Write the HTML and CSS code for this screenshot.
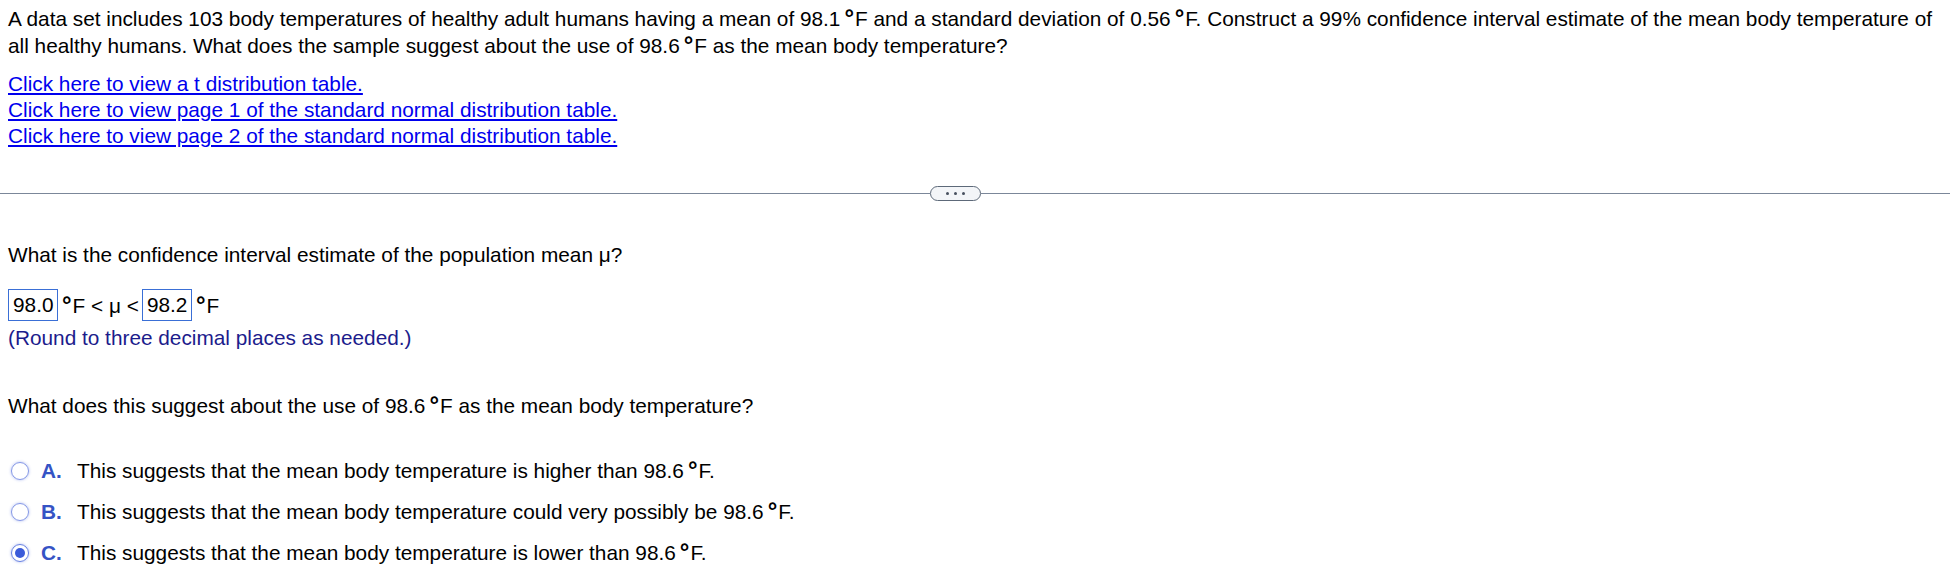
FILE: index.html
```html
<!DOCTYPE html>
<html lang="en">
<head>
  <meta charset="UTF-8" />
  <title>Confidence Interval Question</title>
  <link rel="stylesheet" href="styles.css">
</head>
<body>
  <div class="question">
    <p class="stem">A data set includes 103 body temperatures of healthy adult humans having a mean of 98.1<span class="deg">°</span>F and a standard deviation of 0.56<span class="deg">°</span>F. Construct a 99% confidence interval estimate of the mean body temperature of<br>all healthy humans. What does the sample suggest about the use of 98.6<span class="deg">°</span>F as the mean body temperature?</p>
    <div class="links">
      <a href="#">Click here to view a t distribution table.</a>
      <a href="#">Click here to view page 1 of the standard normal distribution table.</a>
      <a href="#">Click here to view page 2 of the standard normal distribution table.</a>
    </div>
  </div>

  <div class="divider">
    <button class="more" type="button"><span></span><span></span><span></span></button>
  </div>

  <div class="work">
    <p class="ask">What is the confidence interval estimate of the population mean μ?</p>
    <div class="answer-row">
      <span class="box">98.0</span>
      <span class="unit"><span class="deg">°</span>F &lt; μ &lt;</span>
      <span class="box">98.2</span>
      <span class="unit"><span class="deg">°</span>F</span>
    </div>
    <p class="hint">(Round to three decimal places as needed.)</p>

    <p class="ask ask-2">What does this suggest about the use of 98.6<span class="deg">°</span>F as the mean body temperature?</p>
    <ul class="choices">
      <li>
        <span class="radio"></span>
        <span class="letter">A.</span>
        <span>This suggests that the mean body temperature is higher than 98.6<span class="deg">°</span>F.</span>
      </li>
      <li>
        <span class="radio"></span>
        <span class="letter">B.</span>
        <span>This suggests that the mean body temperature could very possibly be 98.6<span class="deg">°</span>F.</span>
      </li>
      <li>
        <span class="radio checked"></span>
        <span class="letter">C.</span>
        <span>This suggests that the mean body temperature is lower than 98.6<span class="deg">°</span>F.</span>
      </li>
    </ul>
  </div>
</body>
</html>
```

FILE: styles.css
```css
:root {
  --text: #000;
  --link: #0000ee;
  --hint: #1c1c8c;
  --letter: #3553c5;
  --box-border: #3a6fd6;
  --rule: #7b8799;
}

body {
  margin: 0;
  padding: 5px 0 0 8px;
  font-family: 'Liberation Sans', Arial, sans-serif;
  font-size: 20.8px;
  line-height: 27px;
  color: var(--text);
  background: #fff;
}

p {
  margin: 0;
}

.deg {
  margin: 0 1px 0 4px;
  font-size: 1.15em;
  font-weight: bold;
  line-height: 0;
}

.links {
  margin-top: 12px;
  display: flex;
  flex-direction: column;
  align-items: flex-start;
  line-height: 26px;
}

.links a {
  color: var(--link);
  text-decoration: underline;
}

.divider {
  margin: 37px 0 0 -8px;
  display: flex;
  align-items: center;
}

.divider::before,
.divider::after {
  content: '';
  border-top: 1px solid var(--rule);
}

.divider::before {
  flex: 0 0 930px;
}

.divider::after {
  flex: 1;
}

.more {
  width: 51px;
  height: 15px;
  padding: 0;
  border: 1.5px solid #5d6979;
  border-radius: 8px;
  background: #f3f5f8;
  display: flex;
  align-items: center;
  justify-content: center;
  gap: 5px;
}

.more span {
  width: 3px;
  height: 3px;
  border-radius: 50%;
  background: #47505e;
}

.ask {
  margin-top: 40px;
}

.answer-row {
  margin-top: 21px;
  display: flex;
  align-items: center;
}

.box {
  border: 1px solid var(--box-border);
  padding: 4px 4px;
  line-height: 22px;
  width: 40px;
}

.unit {
  margin: 0 3px 0 0;
}

.hint {
  margin-top: 3px;
  color: var(--hint);
}

.ask-2 {
  margin-top: 41px;
}

.choices {
  list-style: none;
  margin: 38px 0 0;
  padding: 0;
  display: flex;
  flex-direction: column;
  gap: 14px;
}

.choices li {
  display: flex;
  align-items: center;
}

.radio {
  width: 16px;
  height: 16px;
  margin-left: 3px;
  border: 1.5px solid #8396e6;
  border-radius: 50%;
  box-shadow: 0 0 3px rgba(70, 100, 220, 0.45);
  display: flex;
  align-items: center;
  justify-content: center;
}

.radio.checked {
  border-color: #6680e2;
}

.radio.checked::after {
  content: '';
  width: 10px;
  height: 10px;
  border-radius: 50%;
  background: #3b5bd9;
}

.letter {
  width: 36px;
  margin-left: 12px;
  color: var(--letter);
  font-weight: bold;
}
```
